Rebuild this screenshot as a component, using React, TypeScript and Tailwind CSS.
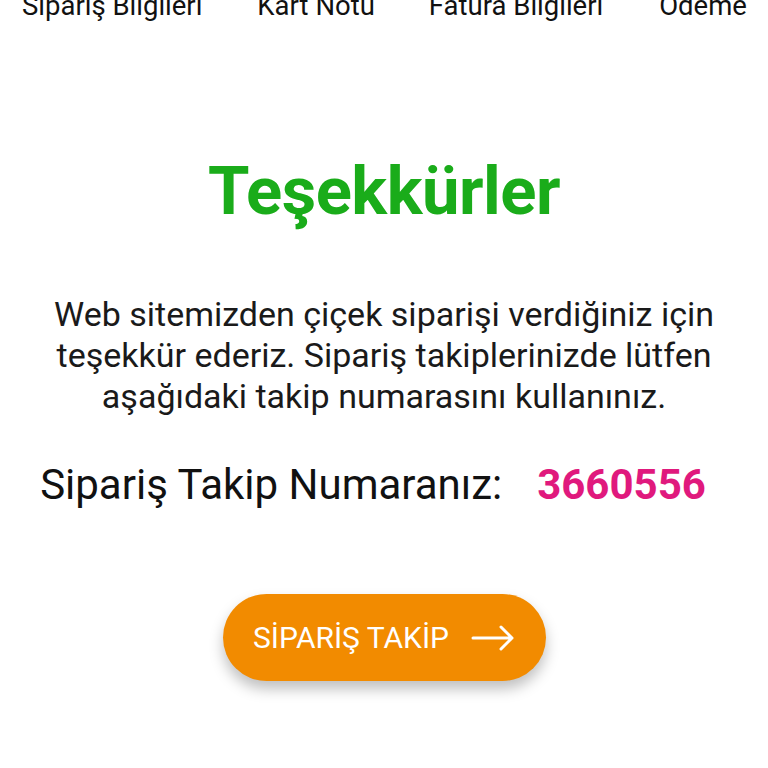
export default function App() {
  return (
    <div className="w-[768px] h-[768px] bg-white overflow-hidden" style={{ fontFamily: "Roboto, 'Noto Sans', sans-serif" }}>
      {/* Steps */}
      <div className="flex items-start h-[40px] -mt-[9px] text-[27.5px] text-[#111] leading-[30px] whitespace-nowrap">
        <span className="ml-[22px]">Sipariş Bilgileri</span>
        <span className="ml-[55px]">Kart Notu</span>
        <span className="ml-[54px]">Fatura Bilgileri</span>
        <span className="ml-[56px]">Ödeme</span>
      </div>

      <div className="flex flex-col items-center">
        <h1 className="mt-[120px] text-[67px] font-bold text-[#1aac1a] leading-[80px] tracking-[-0.5px]">Teşekkürler</h1>
        <p className="mt-[63px] w-[700px] text-center text-[34px] leading-[41px] text-[#1a1a1a]">
          Web sitemizden çiçek siparişi verdiğiniz için teşekkür ederiz. Sipariş takiplerinizde lütfen aşağıdaki takip numarasını kullanınız.
        </p>
        <div className="mt-[43px] pr-[22px] flex items-center text-[42px] leading-[50px]">
          <span className="text-[#111]">Sipariş Takip Numaranız:</span>
          <span className="ml-[35px] font-bold text-[#e0197d]">3660556</span>
        </div>
        <button className="mt-[84px] w-[323px] h-[87px] rounded-full bg-[#f28b00] flex items-center justify-center gap-[22px] text-white text-[30px] shadow-[0_8px_14px_rgba(0,0,0,0.25)]">
          <span>SİPARİŞ TAKİP</span>
          <svg width="44" height="26" viewBox="0 0 44 26" fill="none" stroke="white" strokeWidth="3" strokeLinecap="round" strokeLinejoin="round">
            <path d="M2 13h39M30 2l11 11-11 11" />
          </svg>
        </button>
      </div>
    </div>
  );
}
